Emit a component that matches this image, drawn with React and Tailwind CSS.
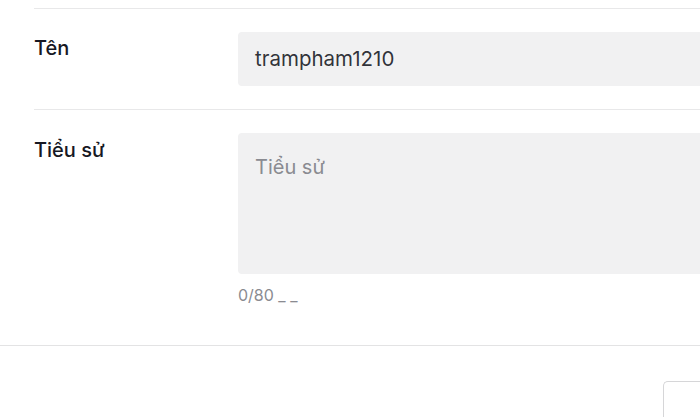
import React from 'react';

export default function App() {
  return (
    <div className="w-[700px] h-[417px] overflow-hidden bg-white font-['Inter',sans-serif] text-[#161823]">
      <div className="pl-[34px] pt-[8px]">
        <div className="border-t border-[#e8e8e9]" />

        <div className="flex pt-[23px] pb-[23px] border-b border-[#e8e8e9]">
          <div className="w-[204px] shrink-0 pt-[4px] text-[20px] leading-[24px] font-medium">Tên</div>
          <div className="flex-1 h-[54px] rounded-l-[4px] bg-[#f1f1f2] flex items-center pl-[17px] text-[20.5px] text-[#161823]/90">
            trampham1210
          </div>
        </div>

        <div className="flex pt-[23px]">
          <div className="w-[204px] shrink-0 pt-[5px] text-[20px] leading-[24px] font-medium">Tiểu sử</div>
          <div className="flex-1">
            <textarea
              placeholder="Tiểu sử"
              className="block w-full h-[141px] resize-none rounded-l-[4px] bg-[#f1f1f2] pl-[17px] pt-[20px] text-[20px] leading-[28px] outline-none placeholder:text-[#8a8b91]"
            />
            <div className="mt-[11px] text-[16px] leading-[20px] text-[#8a8b91]">0/80 _ _</div>
          </div>
        </div>
      </div>

      <div className="mt-[40px] border-t border-[#e3e3e4]" />
      <div className="flex justify-end pt-[35px]">
        <div className="w-[37px] h-[40px] rounded-tl-[5px] border-t border-l border-[#d6d6d8]" />
      </div>
    </div>
  );
}
